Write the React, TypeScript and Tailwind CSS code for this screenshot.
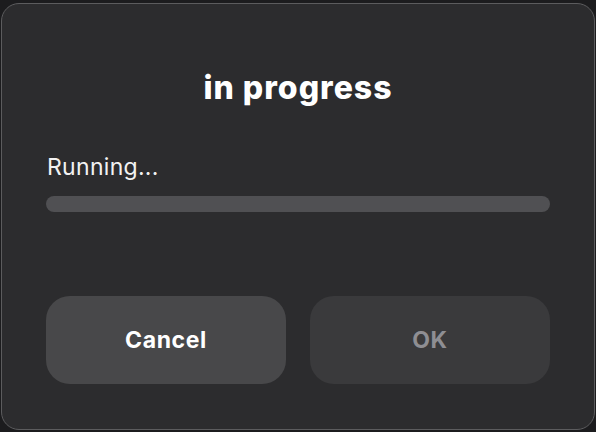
import React from "react";

export default function App() {
  return (
    <div
      className="w-[596px] h-[432px] bg-[#1c1c1e] pt-[3px] px-[1px] pb-[2px]"
      style={{ fontFamily: "Inter, 'Noto Sans', sans-serif" }}
    >
      <div className="h-full rounded-[18px] border border-[#5c5c5e] bg-[#2c2c2e] flex flex-col px-[44px]">
        <div className="pt-[65px] text-center text-white font-extrabold text-[32px] leading-[38px] tracking-[1px]">
          in progress
        </div>
        <div className="mt-[45px] pl-[1px] text-[#f2f2f2] text-[23px] leading-[30px] tracking-[0.3px]">
          Running...
        </div>
        <div className="mt-[14px] h-[16px] rounded-full bg-[#505053]" />
        <div className="mt-[84px] grid grid-cols-2 gap-[24px]">
          <button className="h-[88px] rounded-[24px] bg-[#48484a] text-white font-bold text-[23px] tracking-[0.6px]">
            Cancel
          </button>
          <button className="h-[88px] rounded-[24px] bg-[#3a3a3c] text-[#8e8e93] font-bold text-[23px] tracking-[0.6px]">
            OK
          </button>
        </div>
      </div>
    </div>
  );
}
